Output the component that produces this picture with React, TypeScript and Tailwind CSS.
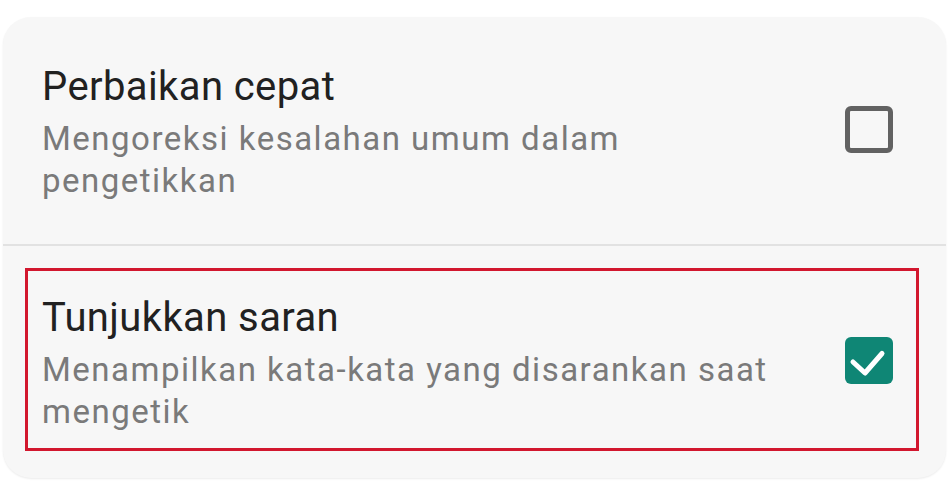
import { useState } from 'react'

type Pref = {
  title: string
  desc: string
  checked: boolean
}

const prefs: Pref[] = [
  { title: 'Perbaikan cepat', desc: 'Mengoreksi kesalahan umum dalam pengetikkan', checked: false },
  { title: 'Tunjukkan saran', desc: 'Menampilkan kata-kata yang disarankan saat mengetik', checked: true },
]

function CheckBox({ checked, onClick }: { checked: boolean; onClick: () => void }) {
  return (
    <button
      onClick={onClick}
      className={
        checked
          ? 'mt-[42px] w-[48px] h-[47px] shrink-0 rounded-[6px] bg-[#0f8675] flex items-center justify-center'
          : 'mt-[42px] w-[48px] h-[47px] shrink-0 rounded-[6px] border-[5px] border-[#626262]'
      }
    >
      {checked && (
        <svg width="48" height="47" viewBox="0 0 48 47" fill="none">
          <polyline
            points="8,25 20,36 37,16.5"
            stroke="white"
            strokeWidth="5"
            strokeLinecap="round"
            strokeLinejoin="round"
          />
        </svg>
      )}
    </button>
  )
}

function PrefText({ title, desc }: { title: string; desc: string }) {
  return (
    <div className="flex-1">
      <p className="text-[40px] leading-[46px] tracking-[0.4px] text-[#212121]">{title}</p>
      <p className="mt-[8px] text-[33px] leading-[42px] tracking-[1.5px] text-[#7a7a7a] max-w-[740px]">{desc}</p>
    </div>
  )
}

export default function App() {
  const [items, setItems] = useState(prefs)

  const toggle = (i: number) =>
    setItems(items.map((p, j) => (j === i ? { ...p, checked: !p.checked } : p)))

  return (
    <div className="w-[950px] h-[490px] bg-white pt-[17px] pl-[3px]" style={{ fontFamily: 'Roboto, sans-serif' }}>
      <div className="w-[943px] h-[461px] rounded-[28px] bg-[#f7f7f7] shadow-[0_1px_2px_rgba(0,0,0,0.08)] overflow-hidden">
        <div className="h-[227px] flex items-start pt-[47px] pl-[39px] pr-[53px]">
          <PrefText title={items[0].title} desc={items[0].desc} />
          <CheckBox checked={items[0].checked} onClick={() => toggle(0)} />
        </div>
        <div className="h-[2px] bg-[#e2e2e2]" />
        <div className="pt-[22px] pl-[22px] pr-[27px]">
          <div className="h-[183px] border-[3px] border-[#d2172e] flex items-start pt-[24px] pl-[14px] pr-[23px]">
            <PrefText title={items[1].title} desc={items[1].desc} />
            <CheckBox checked={items[1].checked} onClick={() => toggle(1)} />
          </div>
        </div>
      </div>
    </div>
  )
}
